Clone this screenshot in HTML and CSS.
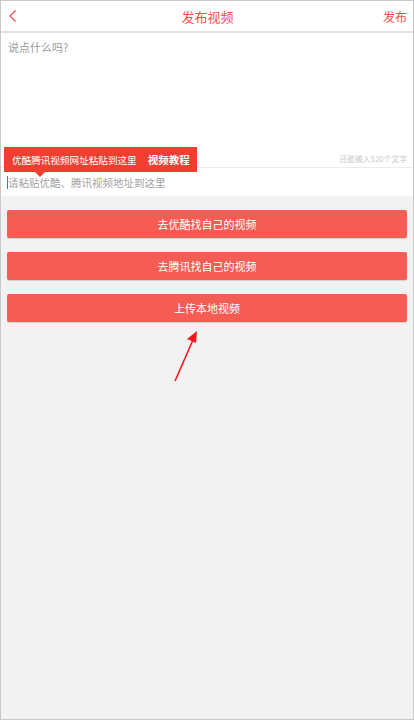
FILE: index.html
```html
<!DOCTYPE html>
<html lang="zh">
<head>
<meta charset="utf-8">
<title>发布视频</title>
<link rel="stylesheet" href="styles.css">
</head>
<body>
<div class="phone">
  <header class="topbar">
    <span class="back"><svg width="10" height="14" viewBox="0 0 10 14"><path d="M7.5 1.5 L2 7 L7.5 12.5" fill="none" stroke="#f0504a" stroke-width="1.3"/></svg></span>
    <h1 class="title">发布视频</h1>
    <span class="publish">发布</span>
  </header>
  <section class="editor">
    <div class="placeholder">说点什么吗?</div>
    <div class="counter">还能输入520个文字</div>
  </section>
  <div class="url-row">
    <span class="caret"></span><span class="url-ph">请粘贴优酷、腾讯视频地址到这里</span>
  </div>
  <div class="tip">
    <span class="tip-text">优酷腾讯视频网址粘贴到这里</span>
    <span class="tip-link">视频教程</span>
  </div>
  <main class="actions">
    <button class="btn">去优酷找自己的视频</button>
    <button class="btn">去腾讯找自己的视频</button>
    <button class="btn">上传本地视频</button>
  </main>
  <svg class="arrow" width="40" height="60" viewBox="0 0 40 60">
    <line x1="6" y1="55" x2="24" y2="14" stroke="#f41818" stroke-width="1.6"/>
    <polygon points="28,5 18,13 27,17" fill="#f41818"/>
  </svg>
</div>
</body>
</html>
```

FILE: styles.css
```css
* { box-sizing: border-box; }
html, body { margin: 0; padding: 0; }
body {
  width: 414px;
  height: 720px;
  font-family: "Noto Sans CJK SC", "Noto Sans", sans-serif;
  background: #f2f2f2;
}
.phone {
  position: relative;
  width: 414px;
  height: 720px;
  border: 1px solid #c9c9c9;
  background: #f2f2f2;
  overflow: hidden;
}
.topbar {
  height: 32px;
  background: #fff;
  border-bottom: 2px solid #e2e2e2;
  display: flex;
  align-items: center;
  justify-content: space-between;
  padding: 0 6px 0 7px;
}
.back { width: 30px; display: flex; align-items: center; }
.title {
  margin: 0;
  font-size: 13px;
  font-weight: normal;
  color: #f0504a;
  line-height: 1;
}
.publish {
  width: 30px;
  text-align: right;
  font-size: 12px;
  color: #f0504a;
}
.editor {
  position: relative;
  height: 135px;
  background: #fff;
  border-bottom: 1px solid #ececec;
  padding: 6px 7px;
}
.placeholder { font-size: 11px; color: #9a9a9a; line-height: 16px; }
.counter {
  position: absolute;
  right: 6px;
  bottom: 3px;
  font-size: 7.8px;
  color: #c8c8c8;
}
.url-row {
  height: 28px;
  background: #fff;
  display: flex;
  align-items: center;
  padding-left: 6px;
}
.caret { width: 1px; height: 13px; background: #1b9a86; }
.url-ph { font-size: 10.5px; color: #a3a3a3; }
.tip {
  position: absolute;
  left: 3px;
  top: 146px;
  width: 193px;
  height: 25px;
  background: #f23d31;
  display: flex;
  align-items: center;
  padding-left: 8px;
  gap: 11px;
  color: #fff;
}
.tip::after {
  content: "";
  position: absolute;
  left: 31px;
  bottom: -5px;
  border-left: 5px solid transparent;
  border-right: 5px solid transparent;
  border-top: 5px solid #f23d31;
}
.tip-text { font-size: 9.6px; }
.tip-link { font-size: 10.5px; font-weight: bold; }
.actions {
  display: flex;
  flex-direction: column;
  gap: 14px;
  padding: 14px 6px 0 6px;
}
.btn {
  height: 28px;
  border: none;
  border-radius: 2px;
  background: #f55c53;
  color: #fff;
  font-family: inherit;
  font-size: 11px;
  box-shadow: 0 1px 1px rgba(0,0,0,0.15);
  padding: 0;
}
.arrow {
  position: absolute;
  left: 168px;
  top: 325px;
}
```
